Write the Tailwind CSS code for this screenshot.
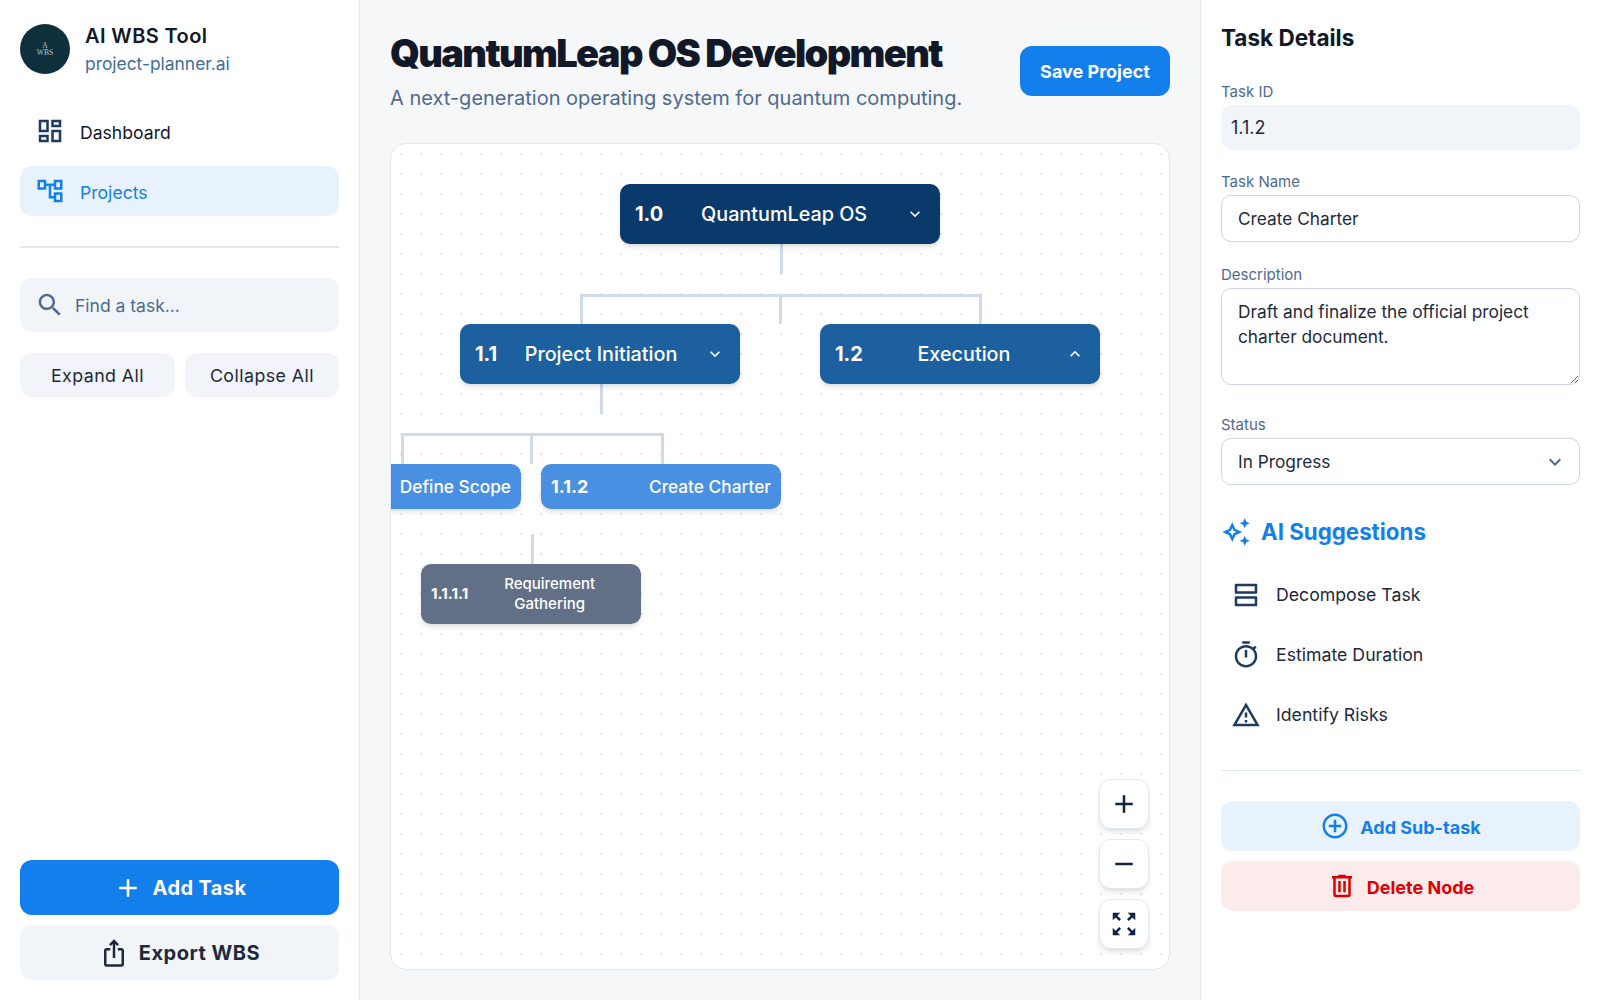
<!DOCTYPE html>
<html lang="en">
<head>
    <meta charset="UTF-8">
    <meta name="viewport" content="width=device-width, initial-scale=1.0">
    <script src="https://cdn.jsdelivr.net/npm/@tailwindcss/browser@4"></script>
    <title>AI WBS Tool</title>
</head>
<body class="font-['Inter',sans-serif] bg-[#f6f7f9] text-[#0f172a]">
<div class="flex h-[1000px] w-[1600px] overflow-hidden">

    <!-- left sidebar -->
    <aside class="w-[360px] shrink-0 bg-white border-r border-[#e2e8f0] flex flex-col px-5 pb-5 pt-6">
        <div class="flex items-center gap-[15px] h-[50px]">
            <div class="w-[50px] h-[50px] rounded-full bg-[#0e2f3c] flex flex-col items-center justify-center text-[#b9c4c4] font-['Liberation_Serif',serif] text-[7.5px] leading-[7px]">
                <span>A</span>
                <span>WBS</span>
            </div>
            <div class="mt-[2px]">
                <p class="text-[20px] leading-[28px] font-semibold tracking-[0.02em] text-[#111827]">AI WBS Tool</p>
                <p class="text-[17.4px] leading-[28px] text-[#3f6d9b]">project-planner.ai</p>
            </div>
        </div>

        <nav class="mt-8 flex flex-col gap-[10px]">
            <a class="h-[50px] flex items-center gap-[15px] pl-[15px] rounded-xl text-[17.6px] text-[#111827]">
                <svg class="w-[30px] h-[30px] fill-[#1e3a5f]" viewBox="0 0 24 24"><path d="M19 5v2h-4V5h4M9 5v6H5V5h4m10 8v6h-4v-6h4M9 17v2H5v-2h4M21 3h-8v6h8V3zM11 3H3v10h8V3zm10 8h-8v10h8V11zm-10 4H3v6h8v-6z"/></svg>
                <span class="mt-[4px]">Dashboard</span>
            </a>
            <a class="h-[50px] flex items-center gap-[15px] pl-[15px] rounded-xl text-[17.6px] bg-[#e7f2fd] text-[#137fec]">
                <svg class="w-[30px] h-[30px] fill-[#137fec]" viewBox="0 0 24 24"><path d="M22 11V3h-7v3H9V3H2v8h7V8h2v10h4v3h7v-8h-7v3h-2V8h2v3h7zM7 9H4V5h3v4zm10 6h3v4h-3v-4zm0-10h3v4h-3V5z"/></svg>
                <span class="mt-[4px]">Projects</span>
            </a>
        </nav>

        <div class="h-[2px] bg-[#e2e8f0] mt-[30px] mb-[30px]"></div>

        <div class="h-[54px] rounded-xl bg-[#f1f4f9] flex items-center pl-[15px] gap-[10px]">
            <svg class="w-[30px] h-[30px] fill-[#4f6a8f] shrink-0" viewBox="0 0 24 24"><path d="M15.5 14h-.79l-.28-.27C15.41 12.59 16 11.11 16 9.5 16 5.91 13.09 3 9.5 3S3 5.91 3 9.5 5.91 16 9.5 16c1.61 0 3.09-.59 4.23-1.57l.27.28v.79l5 4.99L20.49 19l-4.99-5zm-6 0C7.01 14 5 11.99 5 9.5S7.01 5 9.5 5 14 7.01 14 9.5 11.99 14 9.5 14z"/></svg>
            <input class="w-full mt-[2px] bg-transparent outline-none text-[17.5px] placeholder:text-[#4f6a8f]" placeholder="Find a task...">
        </div>

        <div class="flex gap-[10px] mt-[21px]">
            <button class="h-[44px] w-[155px] pt-[2px] rounded-xl bg-[#f1f4f9] text-[17.8px] text-[#1e293b] tracking-wide">Expand All</button>
            <button class="h-[44px] flex-1 pt-[2px] rounded-xl bg-[#f1f4f9] text-[17.8px] text-[#1e293b] tracking-wide">Collapse All</button>
        </div>

        <div class="mt-auto flex flex-col gap-[10px]">
            <button class="h-[55px] rounded-xl bg-[#137fec] text-white text-[20px] font-bold tracking-[0.02em] flex items-center justify-center gap-[10px]">
                <svg class="w-[30px] h-[30px] fill-white" viewBox="0 0 24 24"><path d="M19 13h-6v6h-2v-6H5v-2h6V5h2v6h6v2z"/></svg>
                Add Task
            </button>
            <button class="h-[55px] rounded-xl bg-[#f1f4f9] text-[#1e293b] text-[20px] font-bold tracking-wide flex items-center justify-center gap-[10px]">
                <svg class="w-[30px] h-[30px] fill-[#1e293b]" viewBox="0 0 24 24"><path d="M16 5l-1.42 1.42-1.59-1.59V16h-1.98V4.83L9.42 6.42 8 5l4-4 4 4zm4 5v11c0 1.1-.9 2-2 2H6c-1.11 0-2-.9-2-2V10c0-1.11.89-2 2-2h3v2H6v11h12V10h-3V8h3c1.1 0 2 .89 2 2z"/></svg>
                Export WBS
            </button>
        </div>
    </aside>

    <!-- main -->
    <main class="w-[840px] shrink-0 px-[30px] pt-[30px] pb-[30px] flex flex-col">
        <div class="flex items-center justify-between">
            <div>
                <h1 class="text-[38px] leading-[47px] font-black tracking-[-0.043em] text-[#111827]">QuantumLeap OS Development</h1>
                <p class="mt-[7px] text-[20px] leading-[28px] text-[#4f6a8f]">A next-generation operating system for quantum computing.</p>
            </div>
            <button class="w-[150px] h-[50px] rounded-xl bg-[#137fec] text-white text-[18px] font-bold">Save Project</button>
        </div>

        <!-- wbs canvas -->
        <div class="relative mt-[31px] flex-1 overflow-hidden rounded-2xl border border-[#e2e8f0] bg-white bg-[radial-gradient(circle,#dfe5ec_1px,transparent_1px)] bg-[length:20px_20px]">
            <!-- connectors: offsets are from the canvas corner at 391,144 -->
            <div class="absolute left-[389px] top-[99px] w-[3px] h-[31px] bg-[#cfdbe8]"></div>
            <div class="absolute left-[189px] top-[150px] w-[402px] h-[3px] bg-[#cfdbe8]"></div>
            <div class="absolute left-[189px] top-[150px] w-[3px] h-[30px] bg-[#cfdbe8]"></div>
            <div class="absolute left-[388px] top-[150px] w-[3px] h-[30px] bg-[#cfdbe8]"></div>
            <div class="absolute left-[588px] top-[150px] w-[3px] h-[30px] bg-[#cfdbe8]"></div>

            <div class="absolute left-[209px] top-[240px] w-[3px] h-[30px] bg-[#cfdbe8]"></div>
            <div class="absolute left-[10px] top-[289px] w-[263px] h-[3px] bg-[#cfdbe8]"></div>
            <div class="absolute left-[10px] top-[289px] w-[3px] h-[31px] bg-[#cfdbe8]"></div>
            <div class="absolute left-[139px] top-[289px] w-[3px] h-[31px] bg-[#cfdbe8]"></div>
            <div class="absolute left-[270px] top-[289px] w-[3px] h-[31px] bg-[#cfdbe8]"></div>
            <div class="absolute left-[140px] top-[390px] w-[3px] h-[30px] bg-[#cfdbe8]"></div>

            <!-- nodes -->
            <div class="absolute left-[229px] top-[40px] w-[320px] h-[60px] rounded-[10px] bg-[#0a3a6b] shadow-md text-white flex items-center px-[15px]">
                <span class="text-[20px] font-bold">1.0</span>
                <span class="flex-1 mt-[2px] text-center text-[19.8px] font-medium">QuantumLeap OS</span>
                <svg class="w-5 h-5 fill-white" viewBox="0 0 24 24"><path d="M16.59 8.59L12 13.17 7.41 8.59 6 10l6 6 6-6z"/></svg>
            </div>
            <div class="absolute left-[69px] top-[180px] w-[280px] h-[60px] rounded-[10px] bg-[#1c60a0] shadow-md text-white flex items-center px-[15px]">
                <span class="text-[20px] font-bold">1.1</span>
                <span class="flex-1 mt-[2px] text-center text-[19.8px] font-medium">Project Initiation</span>
                <svg class="w-5 h-5 fill-white" viewBox="0 0 24 24"><path d="M16.59 8.59L12 13.17 7.41 8.59 6 10l6 6 6-6z"/></svg>
            </div>
            <div class="absolute left-[429px] top-[180px] w-[280px] h-[60px] rounded-[10px] bg-[#1c60a0] shadow-md text-white flex items-center px-[15px]">
                <span class="text-[20px] font-bold">1.2</span>
                <span class="flex-1 mt-[2px] text-center text-[19.8px] font-medium">Execution</span>
                <svg class="w-5 h-5 fill-white" viewBox="0 0 24 24"><path d="M12 8l-6 6 1.41 1.41L12 10.83l4.59 4.58L18 14z"/></svg>
            </div>
            <div class="absolute -left-[110px] top-[320px] w-[240px] h-[45px] rounded-[10px] bg-[#4a90e2] shadow-md text-white flex items-center justify-end px-[10px]">
                <span class="text-[17.3px] font-medium">Define Scope</span>
            </div>
            <div class="absolute left-[150px] top-[320px] w-[240px] h-[45px] rounded-[10px] bg-[#4a90e2] shadow-md text-white flex items-center justify-between px-[10px]">
                <span class="text-[18px] font-bold">1.1.2</span>
                <span class="text-[17.3px] font-medium">Create Charter</span>
            </div>
            <div class="absolute left-[30px] top-[420px] w-[220px] h-[60px] rounded-[10px] bg-[#627087] shadow-md text-white flex items-center px-[10px]">
                <span class="text-[15.2px] font-bold">1.1.1.1</span>
                <span class="flex-1 text-center text-[15px] leading-[20px] font-medium">Requirement Gathering</span>
            </div>

            <!-- zoom controls -->
            <div class="absolute right-[20px] bottom-[20px] flex flex-col gap-[10px]">
                <button class="w-[50px] h-[50px] rounded-xl bg-white border border-[#e2e8f0] shadow-md flex items-center justify-center">
                    <svg class="w-[30px] h-[30px] fill-[#0f2343]" viewBox="0 0 24 24"><path d="M19 13h-6v6h-2v-6H5v-2h6V5h2v6h6v2z"/></svg>
                </button>
                <button class="w-[50px] h-[50px] rounded-xl bg-white border border-[#e2e8f0] shadow-md flex items-center justify-center">
                    <svg class="w-[30px] h-[30px] fill-[#0f2343]" viewBox="0 0 24 24"><path d="M19 13H5v-2h14v2z"/></svg>
                </button>
                <button class="w-[50px] h-[50px] rounded-xl bg-white border border-[#e2e8f0] shadow-md flex items-center justify-center">
                    <svg class="w-[30px] h-[30px] fill-[#0f2343]" viewBox="0 0 24 24"><path d="M15 3l2.3 2.3-2.89 2.87 1.42 1.42L18.7 6.7 21 9V3h-6zM3 9l2.3-2.3 2.87 2.89 1.42-1.42L6.7 5.3 9 3H3v6zm6 12l-2.3-2.3 2.89-2.87-1.42-1.42L5.3 17.3 3 15v6h6zm12-6l-2.3 2.3-2.87-2.89-1.42 1.42 2.89 2.87L15 21h6v-6z"/></svg>
                </button>
            </div>
        </div>
    </main>

    <!-- task details -->
    <aside class="flex-1 bg-white border-l border-[#e2e8f0] pl-5 pr-5 pt-5 flex flex-col">
        <h2 class="pt-[2px] text-[22.5px] leading-[32px] font-bold h-[34px] text-[#111827]">Task Details</h2>

        <label class="mt-7 text-[15px] leading-[20px] text-[#4f6a8f]">Task ID</label>
        <div class="mt-[3px] h-[45px] rounded-xl bg-[#f1f4f9] flex items-center px-[10px] text-[18px] text-[#1e293b]">1.1.2</div>

        <label class="mt-[22px] text-[15px] leading-[20px] text-[#4f6a8f]">Task Name</label>
        <input class="mt-[3px] h-[47px] rounded-[10px] border border-[#cbd5e1] px-4 text-[17.3px] text-[#1e293b] outline-none" value="Create Charter">

        <label class="mt-[22px] pt-[1px] h-[20px] text-[15px] leading-[20px] text-[#4f6a8f]">Description</label>
        <textarea class="mt-1 h-[97px] rounded-[10px] border border-[#cbd5e1] px-4 py-[10px] text-[17.3px] leading-[25px] text-[#1e293b] outline-none">Draft and finalize the official project charter document.</textarea>

        <label class="mt-[30px] text-[15px] leading-[20px] text-[#4f6a8f]">Status</label>
        <div class="mt-[3px] h-[47px] rounded-[10px] border border-[#cbd5e1] px-4 flex items-center justify-between text-[17.3px] text-[#1e293b]">
            In Progress
            <svg class="w-6 h-6 fill-[#4f6a8f] -mr-[4px]" viewBox="0 0 24 24"><path d="M16.59 8.59L12 13.17 7.41 8.59 6 10l6 6 6-6z"/></svg>
        </div>

        <div class="mt-8 h-[30px] flex items-center gap-[10px]">
            <svg class="w-[30px] h-[30px] fill-[#137fec]" viewBox="0 0 24 24"><path d="M19 9l1.25-2.75L23 5l-2.75-1.25L19 1l-1.25 2.75L15 5l2.75 1.25L19 9zm-7.5.5L9 4 6.5 9.5 1 12l5.5 2.5L9 20l2.5-5.5L17 12l-5.5-2.5zM9.99 12.99 9 15.17l-.99-2.18-2.18-.99 2.18-.99L9 8.83l.99 2.18 2.18.99-2.18.99zM19 15l-1.25 2.75L15 19l2.75 1.25L19 23l1.25-2.75L23 19l-2.75-1.25L19 15z"/></svg>
            <span class="text-[22.3px] font-bold text-[#137fec]">AI Suggestions</span>
        </div>

        <div class="mt-[23px] flex flex-col gap-[10px]">
            <div class="h-[50px] flex items-center gap-[15px] px-[10px] text-[17.7px] text-[#1e293b]">
                <svg class="w-[30px] h-[30px] fill-[#1e3a5f]" viewBox="0 0 24 24"><path d="M19 5v4H5V5h14m1-2H4c-.55 0-1 .45-1 1v6c0 .55.45 1 1 1h16c.55 0 1-.45 1-1V4c0-.55-.45-1-1-1zM19 15v4H5v-4h14m1-2H4c-.55 0-1 .45-1 1v6c0 .55.45 1 1 1h16c.55 0 1-.45 1-1v-6c0-.55-.45-1-1-1z"/></svg>
                <span class="mt-[1px]">Decompose Task</span>
            </div>
            <div class="h-[50px] flex items-center gap-[15px] px-[10px] text-[17.7px] text-[#1e293b]">
                <svg class="w-[30px] h-[30px] fill-[#1e3a5f]" viewBox="0 0 24 24"><path d="M15 1H9v2h6V1zm-4 13h2V8h-2v6zm8.03-6.61l1.42-1.42c-.43-.51-.9-.99-1.41-1.41l-1.42 1.42C16.07 4.74 14.12 4 12 4c-4.97 0-9 4.03-9 9s4.02 9 9 9 9-4.03 9-9c0-2.12-.74-4.07-1.97-5.61zM12 20c-3.87 0-7-3.13-7-7s3.13-7 7-7 7 3.13 7 7-3.13 7-7 7z"/></svg>
                <span class="mt-[1px]">Estimate Duration</span>
            </div>
            <div class="h-[50px] flex items-center gap-[15px] px-[10px] text-[17.7px] text-[#1e293b]">
                <svg class="w-[30px] h-[30px] fill-[#1e3a5f]" viewBox="0 0 24 24"><path d="M12 5.99L19.53 19H4.47L12 5.99M12 2L1 21h22L12 2zm1 14h-2v2h2v-2zm0-6h-2v4h2v-4z"/></svg>
                <span class="mt-[1px]">Identify Risks</span>
            </div>
        </div>

        <div class="mt-[30px] h-[1px] bg-[#e2e8f0]"></div>

        <button class="mt-[30px] h-[50px] rounded-xl bg-[#e7f2fd] text-[#137fec] text-[18px] font-bold flex items-center justify-center gap-[10px]">
            <svg class="w-[30px] h-[30px] fill-[#137fec]" viewBox="0 0 24 24"><path d="M13 7h-2v4H7v2h4v4h2v-4h4v-2h-4V7zm-1-5C6.48 2 2 6.48 2 12s4.48 10 10 10 10-4.48 10-10S17.52 2 12 2zm0 18c-4.41 0-8-3.59-8-8s3.59-8 8-8 8 3.59 8 8-3.59 8-8 8z"/></svg>
            <span class="mt-[2px]">Add Sub-task</span>
        </button>
        <button class="mt-[10px] h-[50px] rounded-xl bg-[#fcebeb] text-[#dc0000] text-[18px] font-bold flex items-center justify-center gap-[10px]">
            <svg class="w-[30px] h-[30px] fill-[#dc0000]" viewBox="0 0 24 24"><path d="M15 4V3H9v1H4v2h1v13c0 1.1.9 2 2 2h10c1.1 0 2-.9 2-2V6h1V4h-5zm2 15H7V6h10v13zM9 8h2v9H9zm4 0h2v9h-2z"/></svg>
            <span class="mt-[2px]">Delete Node</span>
        </button>
    </aside>
</div>
</body>
</html>
